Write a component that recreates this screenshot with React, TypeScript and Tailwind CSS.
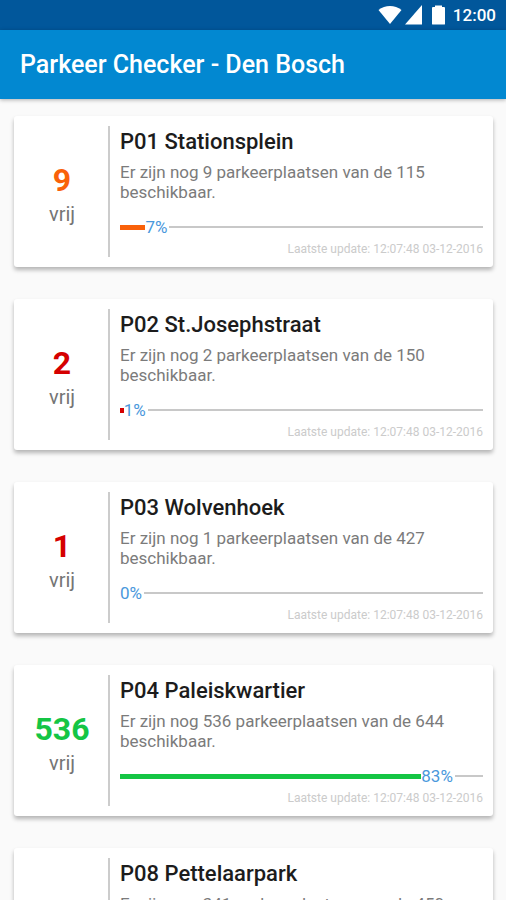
interface Garage {
  name: string;
  free: number;
  total: number;
  percent: number;
  textColor: string;
  barColor: string;
}

const UPDATED_AT = '12:07:48 03-12-2016';

const garages: Garage[] = [
  { name: 'P01 Stationsplein', free: 9, total: 115, percent: 7, textColor: 'text-[#f9610a]', barColor: 'bg-[#f9610a]' },
  { name: 'P02 St.Josephstraat', free: 2, total: 150, percent: 1, textColor: 'text-[#d50000]', barColor: 'bg-[#d50000]' },
  { name: 'P03 Wolvenhoek', free: 1, total: 427, percent: 0, textColor: 'text-[#d50000]', barColor: 'bg-[#d50000]' },
  { name: 'P04 Paleiskwartier', free: 536, total: 644, percent: 83, textColor: 'text-[#14c544]', barColor: 'bg-[#14c544]' },
  { name: 'P08 Pettelaarpark', free: 341, total: 450, percent: 75, textColor: 'text-[#14c544]', barColor: 'bg-[#14c544]' },
];

function StatusBar() {
  return (
    <div className="flex h-[30px] shrink-0 items-center justify-end bg-[#01579b] pr-[10px] text-white">
      <svg className="mr-[3px] h-5 w-6" viewBox="0 0 24 20" fill="currentColor" aria-hidden="true">
        <path d="M.5 5C7-.2 17-.2 23.5 5L12 19Z" />
      </svg>
      <svg className="mr-[10px] h-5 w-[17px]" viewBox="0 0 17 20" fill="currentColor" aria-hidden="true">
        <path d="M17 0v19.500H0Z" />
      </svg>
      <svg className="mr-2 h-5 w-[13px]" viewBox="0 0 13 20" fill="currentColor" aria-hidden="true">
        <path d="M3 .5h7v1.500h2q1 0 1 1v16q0 .5-1 .5H1q-1 0-1-.5V3q0-1 1-1h2Z" />
      </svg>
      <span className="text-[17px] leading-6 font-medium">12:00</span>
    </div>
  );
}

function Progress({ garage }: { garage: Garage }) {
  return (
    <div
      className="mt-[15px] flex h-5 items-center"
      role="progressbar"
      aria-label={garage.name}
      aria-valuenow={garage.percent}
    >
      <div className={`h-[5px] shrink-0 ${garage.barColor}`} style={{ width: `${garage.percent}%` }} />
      <span className="text-[17px] leading-5 text-[#4a98dc]">{garage.percent}%</span>
      <div className="ml-[2px] h-[2px] flex-1 bg-[#c8c8c8]" />
    </div>
  );
}

function GarageCard({ garage }: { garage: Garage }) {
  return (
    <article className="flex rounded-[3px] bg-white p-[10px] shadow-[0_3px_4px_rgba(0,0,0,0.28)]">
      {/* Free spots */}
      <div className="flex w-[86px] shrink-0 flex-col items-center justify-center border-r-2 border-[#cccccc] pt-1 pr-2">
        <span className={`text-[32px] leading-9 font-bold ${garage.textColor}`}>{garage.free}</span>
        <span className="mt-1 text-xl leading-6 text-[#757575]">vrij</span>
      </div>

      {/* Details */}
      <div className="min-w-0 flex-1 pl-[10px]">
        <h2 className="mt-[2px] text-[22px] leading-7 font-medium text-[#1c1c1c]">{garage.name}</h2>
        <p className="mt-[6px] text-[17px] leading-5 text-[#7b7b7b]">
          Er zijn nog {garage.free} parkeerplaatsen van de {garage.total} beschikbaar.
        </p>
        <Progress garage={garage} />
        <p className="mt-1 text-right text-xs leading-4 text-[#cbcbcb]">Laatste update: {UPDATED_AT}</p>
      </div>
    </article>
  );
}

export default function App() {
  return (
    <div className="flex h-screen flex-col bg-[#fafafa] font-[Roboto,sans-serif]">
      <StatusBar />
      <header className="z-10 flex h-[69px] shrink-0 items-center bg-[#0288d1] px-5 shadow-[0_1px_4px_rgba(0,0,0,0.3)]">
        <h1 className="text-[25px] leading-8 font-medium text-white">Parkeer Checker - Den Bosch</h1>
      </header>
      <main className="flex-1 space-y-8 overflow-y-auto pt-[17px] pr-[13px] pb-4 pl-[14px] [scrollbar-width:none]">
        {garages.map((garage) => (
          <GarageCard key={garage.name} garage={garage} />
        ))}
      </main>
    </div>
  );
}
